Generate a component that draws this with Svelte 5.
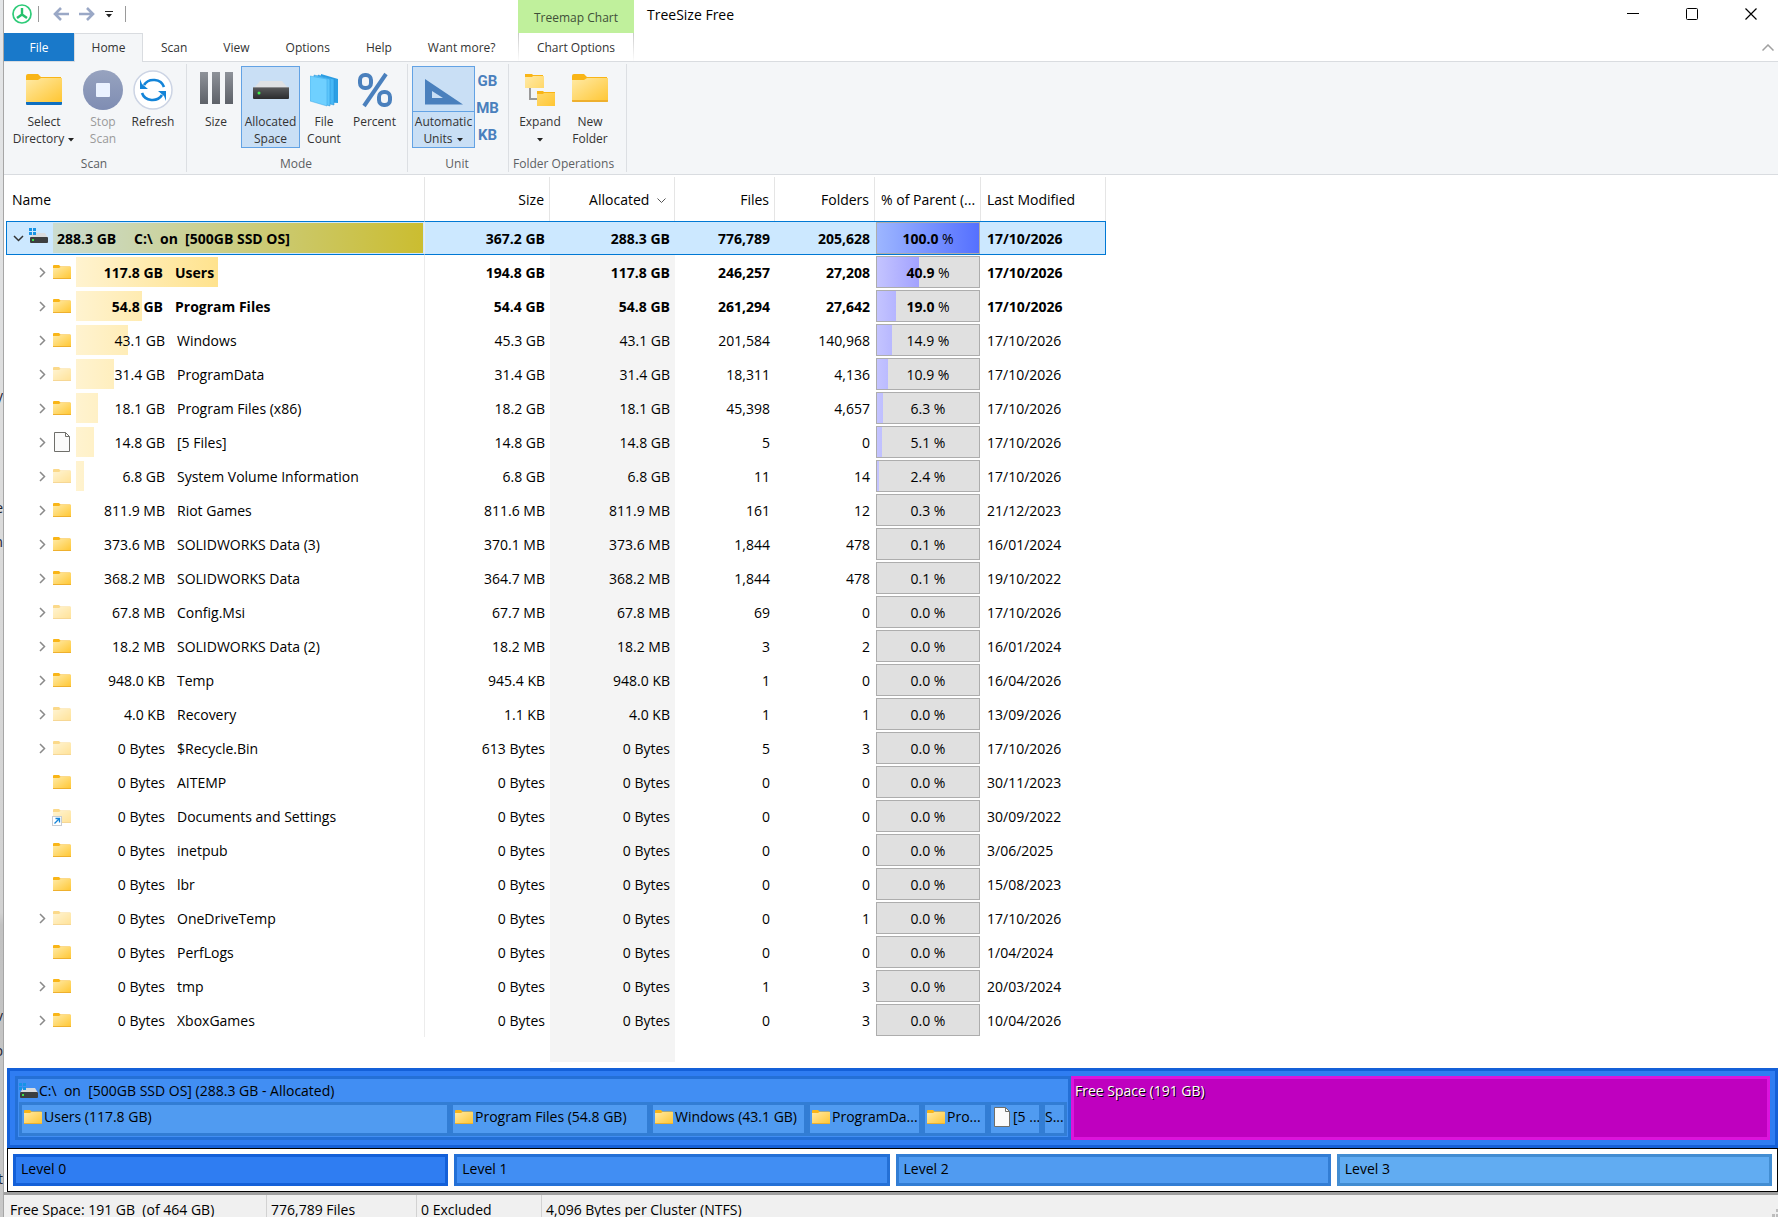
<script lang="ts">
	type Row = {
		name: string;
		size: string;
		allocated: string;
		files: string;
		folders: string;
		percent: number;
		modified: string;
		icon?: 'folder' | 'hidden' | 'file' | 'link';
		leaf?: boolean;
		bold?: boolean;
	};

	const root: Row = {
		name: 'C:\\  on  [500GB SSD OS]',
		size: '367.2 GB',
		allocated: '288.3 GB',
		files: '776,789',
		folders: '205,628',
		percent: 100,
		modified: '17/10/2026',
		bold: true
	};

	const rows: Row[] = [
		{ name: 'Users', size: '194.8 GB', allocated: '117.8 GB', files: '246,257', folders: '27,208', percent: 40.9, modified: '17/10/2026', bold: true },
		{ name: 'Program Files', size: '54.4 GB', allocated: '54.8 GB', files: '261,294', folders: '27,642', percent: 19.0, modified: '17/10/2026', bold: true },
		{ name: 'Windows', size: '45.3 GB', allocated: '43.1 GB', files: '201,584', folders: '140,968', percent: 14.9, modified: '17/10/2026' },
		{ name: 'ProgramData', size: '31.4 GB', allocated: '31.4 GB', files: '18,311', folders: '4,136', percent: 10.9, modified: '17/10/2026', icon: 'hidden' },
		{ name: 'Program Files (x86)', size: '18.2 GB', allocated: '18.1 GB', files: '45,398', folders: '4,657', percent: 6.3, modified: '17/10/2026' },
		{ name: '[5 Files]', size: '14.8 GB', allocated: '14.8 GB', files: '5', folders: '0', percent: 5.1, modified: '17/10/2026', icon: 'file' },
		{ name: 'System Volume Information', size: '6.8 GB', allocated: '6.8 GB', files: '11', folders: '14', percent: 2.4, modified: '17/10/2026', icon: 'hidden' },
		{ name: 'Riot Games', size: '811.6 MB', allocated: '811.9 MB', files: '161', folders: '12', percent: 0.3, modified: '21/12/2023' },
		{ name: 'SOLIDWORKS Data (3)', size: '370.1 MB', allocated: '373.6 MB', files: '1,844', folders: '478', percent: 0.1, modified: '16/01/2024' },
		{ name: 'SOLIDWORKS Data', size: '364.7 MB', allocated: '368.2 MB', files: '1,844', folders: '478', percent: 0.1, modified: '19/10/2022' },
		{ name: 'Config.Msi', size: '67.7 MB', allocated: '67.8 MB', files: '69', folders: '0', percent: 0, modified: '17/10/2026', icon: 'hidden' },
		{ name: 'SOLIDWORKS Data (2)', size: '18.2 MB', allocated: '18.2 MB', files: '3', folders: '2', percent: 0, modified: '16/01/2024' },
		{ name: 'Temp', size: '945.4 KB', allocated: '948.0 KB', files: '1', folders: '0', percent: 0, modified: '16/04/2026' },
		{ name: 'Recovery', size: '1.1 KB', allocated: '4.0 KB', files: '1', folders: '1', percent: 0, modified: '13/09/2026', icon: 'hidden' },
		{ name: '$Recycle.Bin', size: '613 Bytes', allocated: '0 Bytes', files: '5', folders: '3', percent: 0, modified: '17/10/2026', icon: 'hidden' },
		{ name: 'AITEMP', size: '0 Bytes', allocated: '0 Bytes', files: '0', folders: '0', percent: 0, modified: '30/11/2023', leaf: true },
		{ name: 'Documents and Settings', size: '0 Bytes', allocated: '0 Bytes', files: '0', folders: '0', percent: 0, modified: '30/09/2022', icon: 'link', leaf: true },
		{ name: 'inetpub', size: '0 Bytes', allocated: '0 Bytes', files: '0', folders: '0', percent: 0, modified: '3/06/2025', leaf: true },
		{ name: 'lbr', size: '0 Bytes', allocated: '0 Bytes', files: '0', folders: '0', percent: 0, modified: '15/08/2023', leaf: true },
		{ name: 'OneDriveTemp', size: '0 Bytes', allocated: '0 Bytes', files: '0', folders: '1', percent: 0, modified: '17/10/2026', icon: 'hidden' },
		{ name: 'PerfLogs', size: '0 Bytes', allocated: '0 Bytes', files: '0', folders: '0', percent: 0, modified: '1/04/2024', leaf: true },
		{ name: 'tmp', size: '0 Bytes', allocated: '0 Bytes', files: '1', folders: '3', percent: 0, modified: '20/03/2024' },
		{ name: 'XboxGames', size: '0 Bytes', allocated: '0 Bytes', files: '0', folders: '3', percent: 0, modified: '10/04/2026' }
	];

	// share is the part of the parent box's width
	const tiles = [
		{ label: 'Users (117.8 GB)', share: 431, icon: 'folder' },
		{ label: 'Program Files (54.8 GB)', share: 200, icon: 'folder' },
		{ label: 'Windows (43.1 GB)', share: 157, icon: 'folder' },
		{ label: 'ProgramDa...', share: 115, icon: 'folder' },
		{ label: 'Pro...', share: 66, icon: 'folder' },
		{ label: '[5 ...', share: 54, icon: 'file' },
		{ label: 'S...', share: 25, icon: '' }
	];
	const tileColumns = tiles.map((tile) => `minmax(0, ${tile.share}fr)`).join(' ');

	const levels = ['Level 0', 'Level 1', 'Level 2', 'Level 3'];
	const tabs = ['Scan', 'View', 'Options', 'Help', 'Want more?'];

	// the window behind this one, peeking out on the left
	const behind = [
		{ text: 'y', top: 386 },
		{ text: 'e', top: 498 },
		{ text: 'm', top: 532 },
		{ text: 'v', top: 1006 },
		{ text: 'p', top: 1041 },
		{ text: 't', top: 1169 }
	];

	let mode = $state('allocated');
	let expanded = $state(true);
</script>

{#snippet folder(width: number, height: number)}
	<svg class="icon" {width} {height} viewBox="0 0 36 28" preserveAspectRatio="none" aria-hidden="true">
		<path d="M0 2q0-2 2-2h10l3 3h20v6H0z" fill="#f9b517" />
		<path d="M0 6h12l3-2h21v23q0 1-1 1H1q-1 0-1-1z" fill="url(#folderFill)" />
		<path d="M0 26h36v1q0 1-1 1H1q-1 0-1-1z" fill="#eeb02e" />
	</svg>
{/snippet}

{#snippet page()}
	<svg class="icon" width="18" height="22" viewBox="0 0 18 22" aria-hidden="true">
		<path d="M1.5 1.5h11l4 4v15h-15z" fill="#fbfbfb" stroke="#6f6f6b" />
		<path d="M12.500 1.500v4h4" fill="none" stroke="#6f6f6b" />
	</svg>
{/snippet}

{#snippet drive()}
	<svg class="icon" width="20" height="18" viewBox="0 0 20 18" aria-hidden="true">
		<path d="M4 6h12l3 5H1z" fill="#d9dbde" />
		<rect x="1" y="10" width="18" height="6" rx="1" fill="#3c3f41" />
		<rect x="3" y="12" width="2" height="2" fill="#3ee04a" />
		<path d="M0 1h3v3H0zM4 1h3v3H4zM0 5h3v3H0zM4 5h3v3H4z" fill="#1793e6" />
	</svg>
{/snippet}

{#snippet caret()}
	<svg class="caret" width="8" height="4" viewBox="0 0 8 4" aria-hidden="true"><path d="M1 0h6L4 3.500z" fill="#222" /></svg>
{/snippet}

{#snippet cells(row: Row)}
	<td class="num">{row.size}</td>
	<td class="num sorted">{row.allocated}</td>
	<td class="num">{row.files}</td>
	<td class="num">{row.folders}</td>
	<td class="percent-cell">
		<div class="meter">
			<span class="meter-fill" style:width="{row.percent}%"></span>
			<span class="meter-text"><span>{row.percent.toFixed(1)}</span> %</span>
		</div>
	</td>
	<td class="date">{row.modified}</td>
{/snippet}

<svg class="defs" width="0" height="0" aria-hidden="true">
	<defs>
		<linearGradient id="folderFill" x1="0" y1="0" x2="1" y2="1">
			<stop offset="0" stop-color="#ffeaa6" />
			<stop offset="1" stop-color="#ffc632" />
		</linearGradient>
		<linearGradient id="barFill" x1="0" y1="0" x2="0" y2="1">
			<stop offset="0" stop-color="#8e9299" />
			<stop offset="1" stop-color="#5d6168" />
		</linearGradient>
		<linearGradient id="stopFill" x1="0" y1="0" x2="0" y2="1">
			<stop offset="0" stop-color="#97a3bf" />
			<stop offset="1" stop-color="#7f8db3" />
		</linearGradient>
		<linearGradient id="driveFill" x1="0" y1="0" x2="0" y2="1">
			<stop offset="0" stop-color="#5b5c5e" />
			<stop offset="1" stop-color="#2b2c2e" />
		</linearGradient>
	</defs>
</svg>

<div class="desktop">
	<div class="behind" aria-hidden="true">
		{#each behind as bit}
			<span style:top="{bit.top}px">{bit.text}</span>
		{/each}
	</div>

	<main class="window">
		<header class="titlebar">
			<div class="quick">
				<svg width="20" height="20" viewBox="0 0 20 20" aria-hidden="true">
					<circle cx="10" cy="10" r="9" fill="#fff" stroke="#2ecb78" stroke-width="1.700" />
					<path d="M10 4v7M10 10.500l-5 3.500M10 10.500l5 3.500" fill="none" stroke="#25c06c" stroke-width="2.400" />
				</svg>
				<i class="divider"></i>
				<button class="plain nav" aria-label="Back">
					<svg width="17" height="14" viewBox="0 0 17 14"><path d="M16 7H2M8 1L2 7l6 6" fill="none" stroke="#9aa8c6" stroke-width="2.600" /></svg>
				</button>
				<button class="plain nav" aria-label="Forward">
					<svg width="17" height="14" viewBox="0 0 17 14"><path d="M1 7h14M9 1l6 6-6 6" fill="none" stroke="#9aa8c6" stroke-width="2.600" /></svg>
				</button>
				<button class="plain more" aria-label="Customize quick access">
					<svg width="8" height="7" viewBox="0 0 8 7"><path d="M0 0h8v1H0zM1 3h6L4 6.500z" fill="#222" /></svg>
				</button>
				<i class="divider"></i>
			</div>
			<div class="context-title">Treemap Chart</div>
			<h1>TreeSize Free</h1>
			<div class="controls">
				<button class="plain" aria-label="Minimize">
					<svg width="12" height="12" viewBox="0 0 12 12"><path d="M0 5.500h12" stroke="#000" /></svg>
				</button>
				<button class="plain" aria-label="Maximize">
					<svg width="12" height="12" viewBox="0 0 12 12"><rect x="0.500" y="0.500" width="11" height="11" rx="1" fill="none" stroke="#000" /></svg>
				</button>
				<button class="plain" aria-label="Close">
					<svg width="12" height="12" viewBox="0 0 12 12"><path d="M0.500 0.500l11 11M11.500 0.500l-11 11" stroke="#000" stroke-width="1.200" /></svg>
				</button>
			</div>
		</header>

		<div class="tabbar">
			<nav class="tabs">
				<button class="tab file">File</button>
				<button class="tab active">Home</button>
				{#each tabs as tab}
					<button class="tab">{tab}</button>
				{/each}
			</nav>
			<button class="tab context">Chart Options</button>
			<button class="plain collapse" aria-label="Collapse ribbon">
				<svg width="12" height="7" viewBox="0 0 12 7"><path d="M0.500 6.500L6 1l5.500 5.500" fill="none" stroke="#a0a0a0" stroke-width="1.500" /></svg>
			</button>
		</div>

		<section class="ribbon">
			<div class="group">
				<div class="tools">
					<button class="tool w72">
						<span class="glyph">
							<svg width="36" height="32" viewBox="0 0 36 32" aria-hidden="true">
								<path d="M0 2q0-2 2-2h10l3 3h20v6H0z" fill="#f9b517" />
								<path d="M0 6h12l3-2h21v24H0z" fill="url(#folderFill)" />
								<path d="M0 28h36v2q0 1-1 1H1q-1 0-1-1z" fill="#0f6fc0" />
							</svg>
						</span>
						<span class="text">Select<br />Directory {@render caret()}</span>
					</button>
					<button class="tool w46" disabled>
						<span class="glyph">
							<svg width="40" height="40" viewBox="0 0 40 40" aria-hidden="true">
								<circle cx="20" cy="20" r="20" fill="url(#stopFill)" />
								<rect x="13" y="13" width="14" height="14" rx="1" fill="#eaf2ff" />
							</svg>
						</span>
						<span class="text">Stop<br />Scan</span>
					</button>
					<button class="tool w54">
						<span class="glyph">
							<svg width="40" height="40" viewBox="0 0 40 40" aria-hidden="true">
								<circle cx="20" cy="20" r="19" fill="#fff" stroke="#ccd4e4" stroke-width="1.500" />
								<path d="M11 15a11 10 0 0 1 20 2M29 25a11 10 0 0 1-20-2" fill="none" stroke="#1384d8" stroke-width="2.600" />
								<path d="M7 9l2 5 6 5H7zM33 31l-2-5-6-5h8z" fill="#1384d8" />
							</svg>
						</span>
						<span class="text">Refresh</span>
					</button>
				</div>
				<div class="caption">Scan</div>
			</div>

			<div class="group">
				<div class="tools">
					<button class="tool w50" class:on={mode === 'size'} onclick={() => (mode = 'size')}>
						<span class="glyph raised">
							<svg width="34" height="34" viewBox="0 0 34 34" aria-hidden="true">
								<path d="M1 1h8v32H1zM13 1h8v32h-8zM26 1h8v32h-8z" fill="url(#barFill)" />
							</svg>
						</span>
						<span class="text">Size</span>
					</button>
					<button class="tool w59" class:on={mode === 'allocated'} onclick={() => (mode = 'allocated')}>
						<span class="glyph">
							<svg width="36" height="20" viewBox="0 0 36 20" aria-hidden="true">
								<path d="M7 1h22l6 7H1z" fill="#dfe1e4" />
								<rect x="0" y="7" width="36" height="12" rx="1" fill="url(#driveFill)" />
								<rect x="0" y="7" width="36" height="1" fill="#8b8c8e" />
								<circle cx="6" cy="13" r="1.500" fill="#3cf04a" />
							</svg>
						</span>
						<span class="text">Allocated<br />Space</span>
					</button>
					<button class="tool w48" class:on={mode === 'count'} onclick={() => (mode = 'count')}>
						<span class="glyph">
							<svg width="28" height="34" viewBox="0 0 28 34" aria-hidden="true">
								<path d="M11 1l17 5v24l-17-1z" fill="#2c9fe4" />
								<path d="M8 2l16 4v26l-16-4z" fill="#47b8f6" stroke="#258fd4" stroke-width="0.500" />
								<path d="M4 2l16 4v27L4 28z" fill="#5cc6fb" stroke="#258fd4" stroke-width="0.500" />
								<path d="M0 3l17 3v27L0 28z" fill="#6fd0ff" stroke="#3aa6e6" stroke-width="0.500" />
							</svg>
						</span>
						<span class="text">File<br />Count</span>
					</button>
					<button class="tool w53" class:on={mode === 'percent'} onclick={() => (mode = 'percent')}>
						<span class="glyph">
							<svg width="36" height="36" viewBox="0 0 36 36" aria-hidden="true">
								<g fill="none" stroke="#4a80bd" stroke-width="4">
									<rect x="3" y="3" width="11" height="13" rx="5" />
									<rect x="22" y="20" width="11" height="13" rx="5" />
									<path d="M29 2L7 34" />
								</g>
							</svg>
						</span>
						<span class="text">Percent</span>
					</button>
				</div>
				<div class="caption">Mode</div>
			</div>

			<div class="group">
				<div class="tools">
					<button class="tool w63 on split">
						<span class="glyph">
							<svg width="38" height="26" viewBox="0 0 38 26" aria-hidden="true">
								<path d="M0 0l38 25.500H0zM7 12v7h11z" fill="#4a80bd" fill-rule="evenodd" />
							</svg>
						</span>
						<span class="text">Automatic<br />Units {@render caret()}</span>
					</button>
					<div class="units">
						<button class="plain">GB</button>
						<button class="plain">MB</button>
						<button class="plain">KB</button>
					</div>
				</div>
				<div class="caption">Unit</div>
			</div>

			<div class="group">
				<div class="tools">
					<button class="tool w54">
						<span class="glyph">
							<svg width="30" height="32" viewBox="0 0 30 32" aria-hidden="true">
								<path d="M5 14v11h7" fill="none" stroke="#9a9a9a" stroke-width="2" />
								<path d="M0 0h7l1 1h10v4H0zM12 17h6l1 1h11v4H12z" fill="#f9b517" />
								<path d="M0 3h7l1-1h11v12H0zM12 20h6l1-1h11v13H12z" fill="url(#folderFill)" />
							</svg>
						</span>
						<span class="text">Expand<br />{@render caret()}</span>
					</button>
					<button class="tool w46">
						<span class="glyph raised">{@render folder(36, 28)}</span>
						<span class="text">New<br />Folder</span>
					</button>
				</div>
				<div class="caption">Folder Operations</div>
			</div>
		</section>

		<section class="tree">
			<table>
				<colgroup>
					<col class="c-name" />
					<col class="c-wide" />
					<col class="c-wide" />
					<col class="c-count" />
					<col class="c-count" />
					<col class="c-percent" />
					<col class="c-wide" />
				</colgroup>
				<thead>
					<tr>
						<th class="left">Name</th>
						<th>Size</th>
						<th>
							Allocated
							<svg class="sort" width="9" height="6" viewBox="0 0 9 6" aria-hidden="true"><path d="M0.500 0.500l4 4 4-4" fill="none" stroke="#555" /></svg>
						</th>
						<th>Files</th>
						<th>Folders</th>
						<th class="left">% of Parent (...</th>
						<th class="left">Last Modified</th>
					</tr>
				</thead>
				<tbody>
					<tr class="selected bold">
						<td class="name">
							<div class="entry">
								<button class="plain twist" aria-label="Collapse" onclick={() => (expanded = !expanded)}>
									<svg width="11" height="7" viewBox="0 0 11 7"><path d="M1 1l4.500 4.500L10 1" fill="none" stroke="#333" stroke-width="1.500" /></svg>
								</button>
								<span class="kind">{@render drive()}</span>
								<div class="track">
									<span class="fill" style:width="100%"></span>
									<span class="amount">{root.allocated}</span>
									<span class="label">{root.name}</span>
								</div>
							</div>
						</td>
						{@render cells(root)}
					</tr>
					{#if expanded}
						{#each rows as row}
							<tr class:bold={row.bold}>
								<td class="name">
									<div class="entry child">
										{#if row.leaf}
											<span class="twist"></span>
										{:else}
											<button class="plain twist" aria-label="Expand {row.name}">
												<svg width="7" height="11" viewBox="0 0 7 11"><path d="M1 1l4.500 4.500L1 10" fill="none" stroke="#8a8a8a" stroke-width="1.500" /></svg>
											</button>
										{/if}
										<span class="kind" class:dim={row.icon === 'hidden' || row.icon === 'link'}>
											{#if row.icon === 'file'}
												{@render page()}
											{:else}
												{@render folder(18, 14)}
											{/if}
											{#if row.icon === 'link'}
												<svg class="arrow" width="10" height="10" viewBox="0 0 10 10" aria-hidden="true">
													<rect x="0.500" y="0.500" width="9" height="9" fill="#fff" stroke="#c8ccd2" />
													<path d="M2.500 7.500L7 3M3.500 2.500h4v4" fill="none" stroke="#1384d8" stroke-width="1.300" />
												</svg>
											{/if}
										</span>
										<div class="track">
											<span class="fill" style:width="{row.percent >= 1 ? row.percent : 0}%"></span>
											<span class="amount">{row.allocated}</span>
											<span class="label">{row.name}</span>
										</div>
									</div>
								</td>
								{@render cells(row)}
							</tr>
						{/each}
					{/if}
					<tr class="filler" aria-hidden="true">
						<td></td><td></td><td class="sorted"></td><td></td><td></td><td></td><td></td>
					</tr>
				</tbody>
			</table>
		</section>

		<section class="treemap">
			<div class="volume">
				<div class="volume-title">{@render drive()}<span>C:\&nbsp; on&nbsp; [500GB SSD OS] (288.3 GB - Allocated)</span></div>
				<div class="tiles" style:grid-template-columns={tileColumns}>
					{#each tiles as tile}
						<div class="tile">
							{#if tile.icon === 'folder'}{@render folder(18, 14)}{:else if tile.icon === 'file'}{@render page()}{/if}
							<span>{tile.label}</span>
						</div>
					{/each}
				</div>
			</div>
			<div class="free">Free Space (191 GB)</div>
		</section>

		<section class="legend">
			{#each levels as level, i}
				<div class="level l{i}">{level}</div>
			{/each}
		</section>

		<footer class="status">
			<span class="s1">Free Space: 191 GB&nbsp; (of 464 GB)</span>
			<span class="s2">776,789 Files</span>
			<span class="s3">0 Excluded</span>
			<span>4,096 Bytes per Cluster (NTFS)</span>
			<svg class="grip" width="6" height="8" viewBox="0 0 6 8" aria-hidden="true"><path d="M4 0h2v3H4zM0 5h3v3H0zM4 5h2v3H4z" fill="#bdbdbd" /></svg>
		</footer>
	</main>
</div>

<style>
	:global(body) {
		margin: 0;
		background: #fff;
	}

	.desktop {
		--lead: 514px;
		display: flex;
		height: 100vh;
		overflow: hidden;
		font-family: 'Open Sans', 'Noto Sans', sans-serif;
		font-size: 14px;
		line-height: 20px;
		color: #000;
	}

	.defs {
		position: absolute;
	}

	button {
		font: inherit;
		color: inherit;
		border: 0;
		margin: 0;
		padding: 0;
		background: none;
	}

	.plain {
		display: flex;
		align-items: center;
		justify-content: center;
	}

	.icon {
		display: block;
		flex: none;
	}

	/* sliver of the window underneath */
	.behind {
		position: relative;
		flex: 0 0 3px;
		overflow: hidden;
		background: linear-gradient(#e4e6e8, #dcdcdc 40%, #d2d2d2 75%, #c2c2c2 76%, #c8c8c8);
		border-right: 1px solid #a6a6a6;
	}

	.behind span {
		position: absolute;
		right: 0;
		color: #1d2333;
	}

	.window {
		flex: 1;
		min-width: 0;
		display: flex;
		flex-direction: column;
		background: #fff;
	}

	.titlebar {
		display: flex;
		height: 33px;
	}

	.quick {
		display: flex;
		align-items: center;
		flex: 0 0 var(--lead);
		box-sizing: border-box;
		height: 28px;
		padding-left: 8px;
	}

	.divider {
		width: 1px;
		height: 16px;
		margin: 0 6px;
		background: #9a9a9a;
	}

	.nav {
		width: 25px;
	}

	.quick .nav:first-of-type {
		margin-left: 4px;
	}

	.more {
		width: 20px;
	}

	.context-title {
		flex: 0 0 116px;
		font-size: 12px;
		line-height: 36px;
		text-align: center;
		color: #3f4f38;
		background: #c0f09c;
	}

	h1 {
		flex: 1;
		margin: 0 0 0 13px;
		font-size: 14px;
		line-height: 30px;
		font-weight: 400;
	}

	.controls {
		display: flex;
		gap: 5px;
		height: 28px;
	}

	.controls button {
		width: 54px;
	}

	.tabbar {
		display: flex;
		height: 28px;
		border-bottom: 1px solid #d9dce0;
		font-size: 12px;
		color: #333;
	}

	.tabs {
		display: flex;
		flex: 0 0 var(--lead);
	}

	.tab {
		box-sizing: border-box;
		height: 28px;
		padding: 2px 18px 0;
		white-space: nowrap;
	}

	.tab.file {
		width: 70px;
		color: #fff;
		background: #1979ca;
	}

	.tab.active {
		width: 69px;
		height: 29px;
		padding: 0;
		background: #f4f6f8;
		border: 1px solid #d9dce0;
		border-bottom: 0;
	}

	.tab.context {
		width: 116px;
		padding: 2px 0 0;
		border: 1px solid;
		border-width: 0 1px;
		border-image: linear-gradient(#c8c8c8, #fff) 1;
	}

	.collapse {
		width: 20px;
		margin-left: auto;
	}

	.ribbon {
		display: flex;
		height: 113px;
		box-sizing: border-box;
		padding: 2px 0;
		background: #f4f6f8;
		border-bottom: 1px solid #d9dce0;
		font-size: 12px;
		line-height: 17px;
		color: #333;
	}

	.group {
		display: flex;
		flex-direction: column;
		box-sizing: border-box;
		padding: 2px 6px 0 4px;
		border-right: 1px solid #dcdfe3;
	}

	.group:last-child {
		padding-right: 12px;
	}

	.tools {
		display: flex;
	}

	.tool {
		display: flex;
		flex-direction: column;
		align-items: center;
		box-sizing: border-box;
		height: 82px;
		border: 1px solid transparent;
		white-space: nowrap;
	}

	.tool:disabled {
		color: #9a9a9a;
	}

	.tool.on {
		background: #c9dff5;
		border-color: #62a2e4;
	}

	.tool .text {
		padding-top: 1px;
	}

	.glyph {
		display: flex;
		align-items: center;
		justify-content: center;
		height: 45px;
		width: 100%;
		flex: none;
	}

	.glyph.raised {
		box-sizing: border-box;
		padding-bottom: 4px;
	}

	.split .glyph {
		box-sizing: border-box;
		padding-top: 6px;
		border-bottom: 1px solid #62a2e4;
	}

	.caret {
		vertical-align: middle;
	}

	.w46 { width: 46px; }
	.w48 { width: 48px; }
	.w50 { width: 50px; }
	.w53 { width: 53px; }
	.w54 { width: 54px; }
	.w59 { width: 59px; }
	.w63 { width: 63px; }
	.w72 { width: 72px; }

	.units {
		display: flex;
		flex-direction: column;
		width: 27px;
		padding-top: 2px;
	}

	.units button {
		height: 27px;
		padding-right: 2px;
		font: 700 15px/27px Roboto, sans-serif;
		color: #4a80bd;
	}

	.caption {
		margin-top: 7px;
		text-align: center;
		color: #5c5f63;
		white-space: nowrap;
	}

	.units + .caption {
		margin-top: 5px;
	}

	.tools {
		height: 82px;
	}

	.tree {
		flex: 1;
		min-height: 0;
		overflow: hidden;
		padding: 2px 0 0 2px;
	}

	table {
		width: 1100px;
		table-layout: fixed;
		border-collapse: separate;
		border-spacing: 0;
	}

	.c-name { width: 419px; }
	.c-wide { width: 125px; }
	.c-count { width: 100px; }
	.c-percent { width: 106px; }

	th {
		box-sizing: border-box;
		height: 44px;
		padding: 2px 5px 0;
		border-right: 1px solid #e5e5e5;
		font-weight: 400;
		text-align: right;
		white-space: nowrap;
	}

	th.left {
		padding-left: 6px;
		padding-right: 0;
		text-align: left;
	}

	.sort {
		margin: 0 3px 0 4px;
		vertical-align: middle;
	}

	td {
		box-sizing: border-box;
		height: 34px;
		padding: 0;
		white-space: pre;
	}

	td.num {
		padding: 2px 5px 0 0;
		text-align: right;
	}

	td.date {
		padding: 2px 0 0 6px;
	}

	td.sorted {
		background: #f4f4f4;
	}

	td.name {
		border-right: 1px solid #ececec;
	}

	.bold {
		font-weight: 700;
	}

	.selected td {
		background: #cce8ff;
		border-top: 1px solid #0078d4;
		border-bottom: 1px solid #0078d4;
	}

	.selected td:first-child {
		border-left: 1px solid #0078d4;
	}

	.selected td:last-child {
		border-right: 1px solid #0078d4;
	}

	.filler td {
		height: 25px;
		border: 0;
	}

	.entry {
		display: flex;
		align-items: center;
		height: 30px;
		padding: 0 1px 0 4px;
		white-space: normal;
	}

	.entry.child {
		padding-left: 29px;
	}

	.twist {
		width: 14px;
		height: 14px;
		flex: none;
	}

	.child .twist {
		margin-right: 4px;
	}

	.kind {
		position: relative;
		display: flex;
		flex: none;
		width: 20px;
		margin: 0 4px 4px;
	}

	.child .kind {
		width: 18px;
		margin: 0 5px 0 0;
	}

	.dim > :global(.icon) {
		opacity: 0.5;
	}

	.arrow {
		position: absolute;
		left: -1px;
		bottom: -3px;
	}

	.track {
		position: relative;
		display: flex;
		align-items: center;
		flex: 1;
		height: 30px;
		white-space: pre;
	}

	.track .fill {
		position: absolute;
		inset: 0 auto 0 0;
		background: linear-gradient(90deg, #fff3d0, #ffcb2e 347px);
	}

	.selected .track .fill {
		background: linear-gradient(90deg, #cbdcd0, #cbbd30);
	}

	.amount,
	.label {
		position: relative;
		padding-top: 2px;
	}

	.amount {
		box-sizing: border-box;
		width: 89px;
		text-align: right;
	}

	.bold .amount {
		width: 87px;
	}

	.selected .amount {
		width: 69px;
		padding-left: 4px;
		text-align: left;
	}

	.label {
		margin-left: 12px;
	}

	.percent-cell {
		padding: 0 1px;
	}

	.meter {
		position: relative;
		box-sizing: border-box;
		height: 32px;
		border: 1px solid #adadad;
		background: #e0e0e0;
		line-height: 32px;
		text-align: center;
		white-space: normal;
	}

	.meter-fill {
		position: absolute;
		inset: 0 auto 0 0;
		background: linear-gradient(90deg, #c4c4ff, #7272ff 102px);
	}

	.selected .meter-fill {
		background: linear-gradient(90deg, #9db6ff, #5570ff);
	}

	.meter-text {
		position: relative;
		font-weight: 400;
	}

	.bold .meter-text span {
		font-weight: 700;
	}

	.treemap {
		display: grid;
		grid-template-columns: minmax(0, 1056fr) minmax(0, 699fr);
		height: 80px;
		box-sizing: border-box;
		margin-left: 3px;
		padding: 5px;
		border: 3px solid #1460d8;
		background: #2f7df2;
	}

	.volume {
		display: flex;
		flex-direction: column;
		box-sizing: border-box;
		padding: 1px;
		border: 3px solid #2470d6;
		background: #418ef3;
	}

	.volume-title {
		display: flex;
		align-items: center;
		height: 22px;
	}

	.tiles {
		display: grid;
		height: 34px;
	}

	.tile {
		display: flex;
		align-items: center;
		box-sizing: border-box;
		padding: 0 0 4px 2px;
		border: 3px solid #327dd4;
		background: #509bf1;
		white-space: nowrap;
		overflow: hidden;
	}

	.tile .icon + span {
		margin-left: 2px;
	}

	.tile:last-child {
		padding-left: 0;
	}

	.free {
		box-sizing: border-box;
		padding: 2px 1px;
		border: 3px solid #dc14dc;
		background: #bf00bf;
		color: #fff;
		text-shadow: 1px 1px 0 #000;
	}

	.legend {
		display: flex;
		gap: 6px;
		box-sizing: border-box;
		height: 44px;
		margin-left: 3px;
		padding: 5px;
		border: 1px solid #000;
	}

	.level {
		flex: 1;
		box-sizing: border-box;
		height: 32px;
		padding: 2px 5px;
		border: 3px solid;
	}

	.l0 { background: #2f7df2; border-color: #1460d8; }
	.l1 { background: #418ef3; border-color: #2470d6; }
	.l2 { background: #509bf1; border-color: #327dd4; }
	.l3 { background: #61acf2; border-color: #428dd2; }

	.status {
		display: flex;
		box-sizing: border-box;
		height: 25px;
		padding-left: 6px;
		border-top: 3px solid #a0a0a0;
		background: #f0f0f0;
		line-height: 29px;
		white-space: nowrap;
	}

	.status span {
		box-sizing: border-box;
		padding-right: 8px;
		margin-right: 4px;
	}

	.status .s1,
	.status .s2,
	.status .s3 {
		border-right: 1px solid #d2d2d2;
	}

	.s1 { width: 257px; }
	.s2 { width: 146px; }
	.s3 { width: 121px; }

	.grip {
		margin: 14px 0 0 auto;
	}
</style>
